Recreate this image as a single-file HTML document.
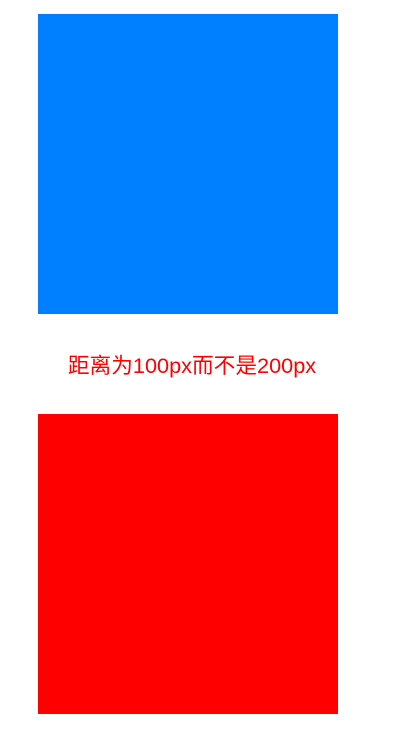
<!DOCTYPE html>
<html><head><meta charset="utf-8"><style>
body{margin:0;width:419px;height:741px;background:#fff;position:relative;overflow:hidden}
.b{position:absolute;left:38px;width:300px;height:300px}
.t{position:absolute;left:37px;width:310px;top:351px;text-align:center;color:#ff0000;font:21.7px/30px "Liberation Sans","Noto Sans CJK SC",sans-serif;white-space:nowrap}
</style></head><body>
<div class="b" style="top:14px;background:#0080ff"></div>
<div class="t">距离为100px而不是200px</div>
<div class="b" style="top:414px;background:#ff0000"></div>
</body></html>
